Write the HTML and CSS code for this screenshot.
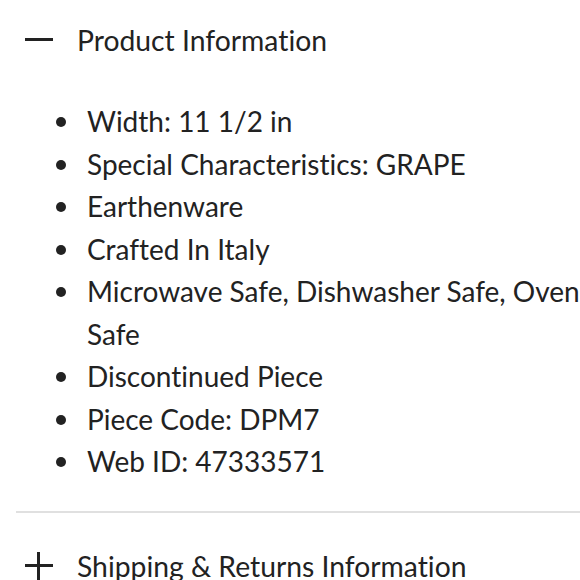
FILE: index.html
```html
<!DOCTYPE html>
<html lang="en">
<head>
<meta charset="utf-8">
<link rel="stylesheet" href="styles.css">
</head>
<body>
<div class="accordion">
  <section class="panel open">
    <div class="panel-head">
      <span class="icon icon-minus"></span>
      <span class="panel-title">Product Information</span>
    </div>
    <ul class="specs">
      <li>Width: 11 1/2 in</li>
      <li>Special Characteristics: GRAPE</li>
      <li>Earthenware</li>
      <li>Crafted In Italy</li>
      <li>Microwave Safe, Dishwasher Safe, Oven Safe</li>
      <li>Discontinued Piece</li>
      <li>Piece Code: DPM7</li>
      <li>Web ID: 47333571</li>
    </ul>
  </section>
  <section class="panel">
    <div class="panel-head">
      <span class="icon icon-plus"></span>
      <span class="panel-title">Shipping &amp; Returns Information</span>
    </div>
  </section>
</div>
</body>
</html>
```
FILE: styles.css
```css
html, body {
  margin: 0;
  padding: 0;
  background: #fff;
}
body {
  font-family: Lato, "Open Sans", sans-serif;
  color: #222;
  overflow: hidden;
  font-variant-ligatures: no-common-ligatures;
}
.accordion {
  margin-left: 16px;
}
.panel {
  border-bottom: 2px solid #e0e0e0;
}
.panel:last-child {
  border-bottom: none;
}
.panel-head {
  display: flex;
  align-items: center;
  gap: 24px;
  height: 80px;
  padding-left: 9px;
  font-size: 28.3px;
}
.panel + .panel .panel-head {
  height: 107px;
}
.icon {
  position: relative;
  display: block;
  width: 28px;
  height: 28px;
  flex: none;
}
.icon::before,
.icon::after {
  content: "";
  position: absolute;
  background: #222;
}
.icon::before {
  left: 0;
  right: 0;
  top: 12px;
  height: 3px;
}
.icon-plus::after {
  top: 0;
  bottom: 0;
  left: 12px;
  width: 3px;
}
.panel-title {
  display: block;
  line-height: 1;
}
.specs {
  list-style: none;
  margin: 0;
  padding: 20px 0 28px 0;
  font-size: 28px;
  line-height: 42.5px;
}
.specs li {
  position: relative;
  padding-left: 71px;
}
.specs li::before {
  content: "";
  position: absolute;
  left: 40px;
  top: 17px;
  width: 10px;
  height: 10px;
  border-radius: 50%;
  background: #222;
}
```
